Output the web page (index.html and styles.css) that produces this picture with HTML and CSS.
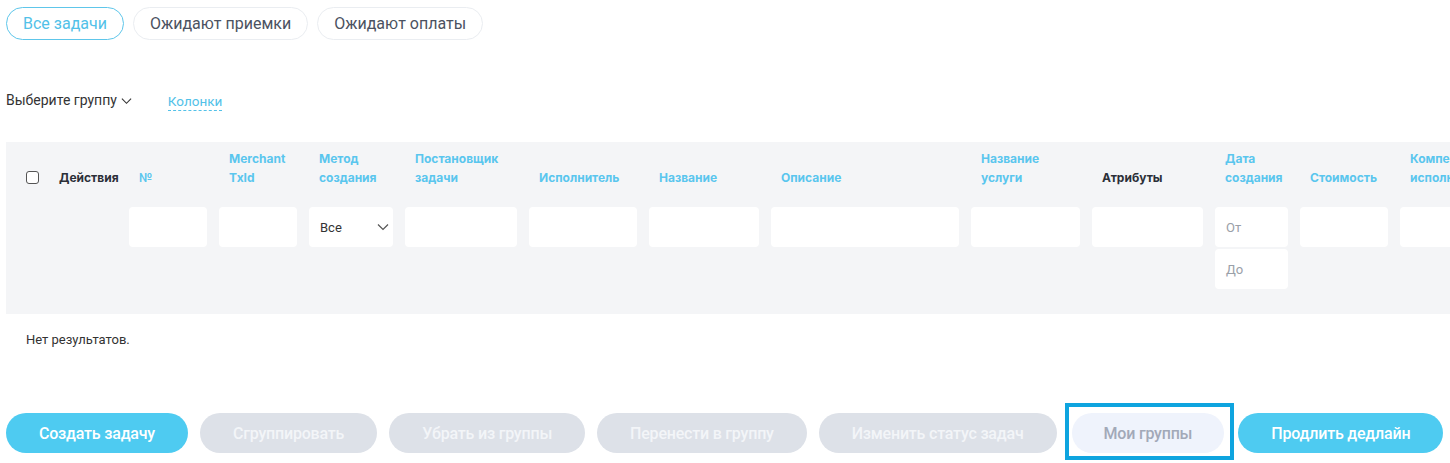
FILE: index.html
```html
<!DOCTYPE html>
<html lang="ru">
<head>
    <meta charset="UTF-8">
    <title>Задачи</title>
    <link rel="stylesheet" href="styles.css">
</head>
<body>
    <div class="page">
        <div class="tabs">
            <a class="tab active">Все задачи</a>
            <a class="tab">Ожидают приемки</a>
            <a class="tab">Ожидают оплаты</a>
        </div>

        <div class="toolbar">
            <div class="group-select">Выберите группу
                <svg width="12" height="8" viewBox="0 0 12 8"><path d="M1 1.5l5 5 5-5" fill="none" stroke="#333" stroke-width="1.2"/></svg>
            </div>
            <a class="columns-link">Колонки</a>
        </div>

        <div class="grid-wrap">
            <div class="grid">
                <div class="th chk"><span class="checkbox"></span></div>
                <div class="th dark first">Действия</div>
                <div class="th">№</div>
                <div class="th">Merchant<br>TxId</div>
                <div class="th">Метод<br>создания</div>
                <div class="th">Постановщик<br>задачи</div>
                <div class="th">Исполнитель</div>
                <div class="th">Название</div>
                <div class="th">Описание</div>
                <div class="th">Название<br>услуги</div>
                <div class="th dark">Атрибуты</div>
                <div class="th">Дата<br>создания</div>
                <div class="th">Стоимость</div>
                <div class="th">Компенсация<br>исполнителю</div>

                <div class="td"></div>
                <div class="td"></div>
                <div class="td"><div class="input"></div></div>
                <div class="td"><div class="input"></div></div>
                <div class="td"><div class="input select">Все
                    <svg width="12" height="8" viewBox="0 0 12 8"><path d="M1 1.5l5 5 5-5" fill="none" stroke="#555" stroke-width="1.2"/></svg>
                </div></div>
                <div class="td"><div class="input"></div></div>
                <div class="td"><div class="input"></div></div>
                <div class="td"><div class="input"></div></div>
                <div class="td"><div class="input"></div></div>
                <div class="td"><div class="input"></div></div>
                <div class="td"><div class="input"></div></div>
                <div class="td">
                    <div class="input ph">От</div>
                    <div class="input ph">До</div>
                </div>
                <div class="td"><div class="input"></div></div>
                <div class="td"><div class="input"></div></div>
            </div>
        </div>

        <div class="empty">Нет результатов.</div>

        <div class="actions">
            <button class="btn primary">Создать задачу</button>
            <button class="btn disabled">Сгруппировать</button>
            <button class="btn disabled">Убрать из группы</button>
            <button class="btn disabled">Перенести в группу</button>
            <button class="btn disabled">Изменить статус задач</button>
            <div class="highlight">
                <button class="btn light">Мои группы</button>
            </div>
            <button class="btn primary">Продлить дедлайн</button>
        </div>
    </div>
</body>
</html>
```

FILE: styles.css
```css
* {
    margin: 0;
    padding: 0;
    box-sizing: border-box;
}
body {
    font-family: Roboto, 'Noto Sans', sans-serif;
    color: #333;
    background: #fff;
}
.page {
    padding: 7px 0 0 6px;
    width: 1450px;
    height: 463px;
    overflow: hidden;
}
.tabs {
    display: flex;
    gap: 9px;
}
.tab {
    height: 33px;
    padding: 0 16px;
    border: 1px solid #eaedf1;
    border-radius: 17px;
    font-size: 16px;
    line-height: 31px;
    color: #4b5261;
}
.tab.active {
    border-color: #5ec6ea;
    color: #52c1e8;
}
.toolbar {
    display: flex;
    align-items: center;
    margin-top: 50px;
    height: 20px;
}
.group-select {
    font-size: 14px;
    color: #333;
    display: flex;
    align-items: center;
    gap: 4px;
}
.group-select svg {
    width: 11px;
    margin-top: 2px;
}
.columns-link {
    margin-left: 36px;
    font-size: 13.5px;
    color: #52c1e8;
    border-bottom: 1px dashed #52c1e8;
    padding-bottom: 1px;
    margin-top: 4px;
}
.grid-wrap {
    margin-top: 32px;
    background: #f4f5f7;
    height: 172px;
    overflow: hidden;
}
.grid {
    display: grid;
    grid-template-columns: 44px 73px 90px 90px 96px 124px 120px 122px 200px 121px 123px 85px 100px 140px;
    grid-template-rows: 59px auto;
    padding-top: 6px;
}
.th {
    display: flex;
    align-items: flex-end;
    padding: 0 6px 20px 16px;
    font-family: Inter, Roboto, sans-serif;
    font-weight: 700;
    font-size: 12px;
    line-height: 19px;
    color: #5ac6ee;
    white-space: nowrap;
}
.th.dark {
    color: #2b2f38;
}
.th.first {
    padding-left: 9px;
}
.th.chk {
    padding-left: 20px;
    padding-bottom: 23px;
}
.checkbox {
    display: block;
    width: 13px;
    height: 13px;
    border: 1px solid #555;
    border-radius: 3px;
    background: #fff;
}
.td {
    padding: 0 6px;
    display: flex;
    flex-direction: column;
    gap: 2px;
}
.input {
    height: 40px;
    background: #fff;
    border-radius: 4px;
    font-size: 13px;
    padding: 0 11px;
    display: flex;
    align-items: center;
}
.select {
    justify-content: space-between;
    color: #333;
    padding-right: 4px;
}
.ph {
    color: #9aa0a8;
}
.empty {
    margin: 18px 0 0 20px;
    font-size: 13px;
    color: #333;
}
.actions {
    display: flex;
    align-items: center;
    gap: 12px;
    margin-top: 66px;
}
.btn {
    height: 40px;
    border: none;
    border-radius: 20px;
    padding: 0 33px;
    font-family: Roboto, sans-serif;
    font-size: 16px;
    font-weight: 500;
    letter-spacing: -0.2px;
}
.btn.primary {
    background: #4ecbf1;
    color: #fff;
}
.btn.disabled {
    background: #dde1e8;
    color: #f3f5f8;
}
.btn.light {
    background: #eff3fc;
    color: #a2a9b8;
    padding: 0 32px;
    display: block;
}
/* tour highlight round "Мои группы" */
.highlight {
    border: 4px solid #0ea4df;
    padding: 6px 6px 3px 3px;
    margin: -10px -8px -7px -4px;
}
```
